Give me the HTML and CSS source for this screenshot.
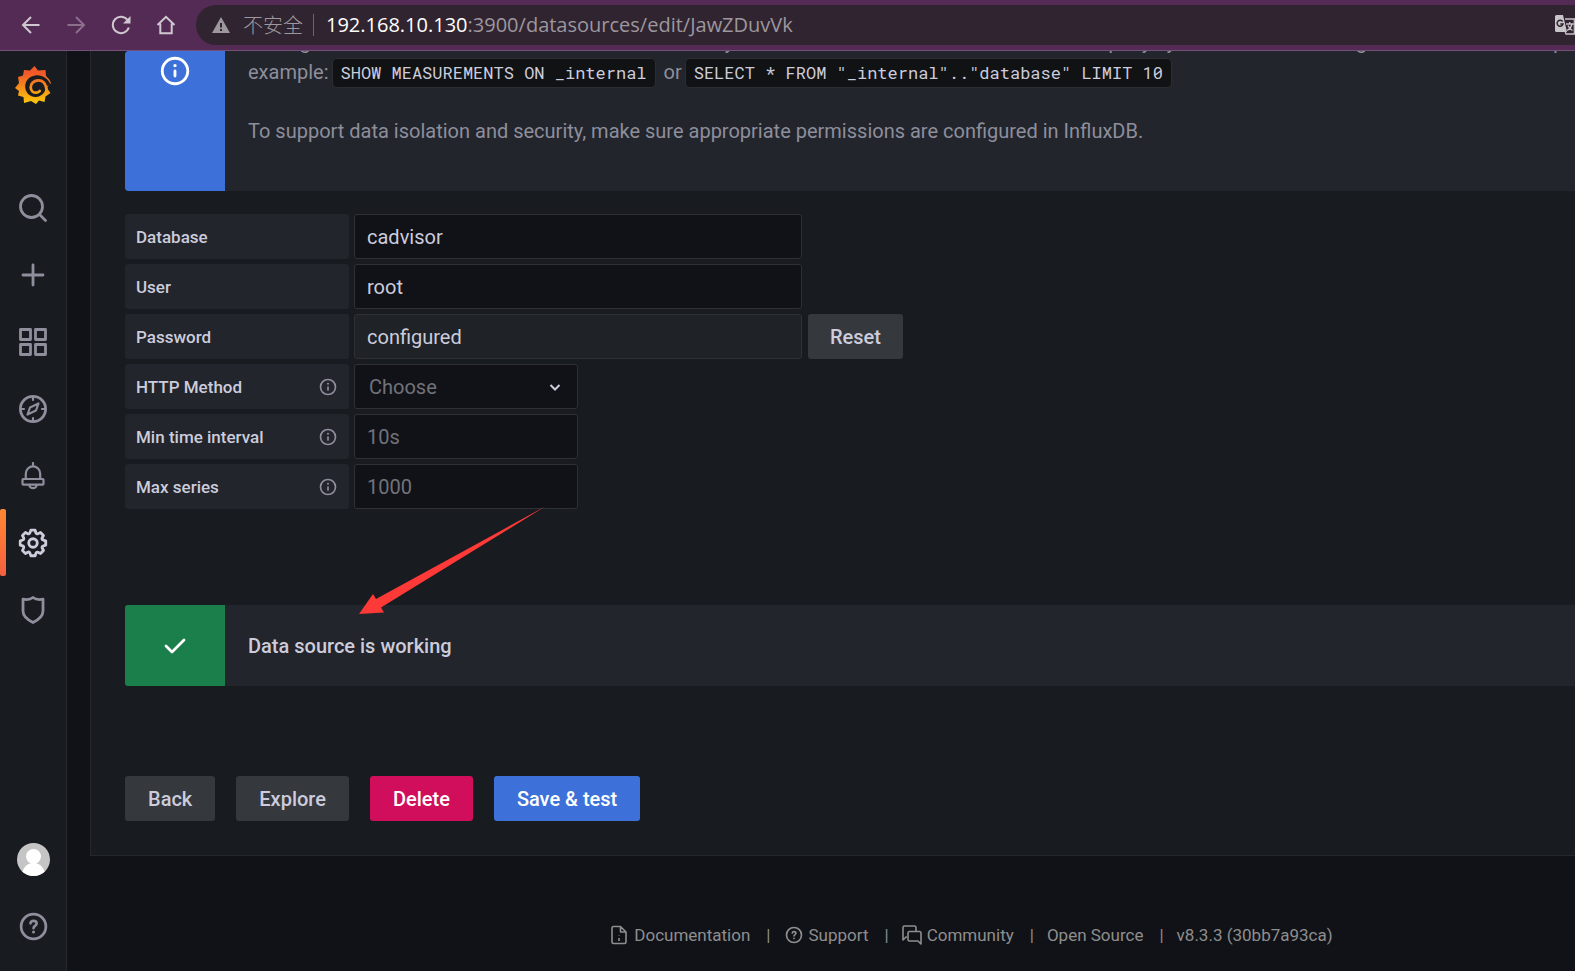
FILE: index.html
```html
<!DOCTYPE html>
<html lang="en">
<head>
<meta charset="utf-8">
<title>InfluxDB: Settings - Grafana</title>
<link rel="stylesheet" href="styles.css">
</head>
<body>
<svg class="defs" aria-hidden="true">
  <symbol id="i-info" viewBox="0 0 24 24"><path stroke="none" fill="currentColor" d="M12 2a10 10 0 1 0 0 20 10 10 0 0 0 0-20zm0 18a8 8 0 1 1 0-16 8 8 0 0 1 0 16zm0-9a1 1 0 0 0-1 1v3.500a1 1 0 0 0 2 0V12a1 1 0 0 0-1-1zm0-4a1.200 1.200 0 1 0 0 2.400A1.200 1.200 0 0 0 12 7z"/></symbol>
  <symbol id="i-help" viewBox="0 0 24 24"><path stroke="none" fill="currentColor" d="M12 2a10 10 0 1 0 0 20 10 10 0 0 0 0-20zm0 18a8 8 0 1 1 0-16 8 8 0 0 1 0 16z"/><path fill="none" stroke="currentColor" stroke-width="1.900" stroke-linecap="round" d="M9.800 9.700C10 8.500 10.900 7.900 12 7.900c1.300 0 2.300.8 2.300 2 0 1.700-2.300 1.600-2.300 3.300"/><circle stroke="none" cx="12" cy="16" r="1.100" fill="currentColor"/></symbol>
</svg>
<div class="browser">
  <header class="toolbar">
    <button class="nav-btn" aria-label="Back"><svg viewBox="0 0 20 20"><path d="M18.500 10H2M10 2 2 10l8 8"/></svg></button>
    <button class="nav-btn nav-off" aria-label="Forward" disabled><svg viewBox="0 0 20 20"><path d="M1.500 10H18M10 2l8 8-8 8"/></svg></button>
    <button class="nav-btn" aria-label="Reload"><svg viewBox="0 0 20 20"><path d="M16.800 5.300A8.200 8.200 0 1 0 17.800 12.500"/><path class="solid" d="M19.500 1v7.500H12z"/></svg></button>
    <button class="nav-btn" aria-label="Home"><svg viewBox="0 0 20 20"><path d="M1.500 10 10 1.800l8.500 8.200M4.300 8.500v9.700h11.400V8.500"/></svg></button>
    <div class="omnibox">
      <svg class="warn" viewBox="0 0 18 16"><path fill="#9d979e" d="M9 0 18 16H0z"/><path fill="#302430" d="M8 6h2v4.500H8zM8 12h2v2H8z"/></svg>
      <span class="insecure">不安全</span>
      <span class="url"><b>192.168.10.130</b>:3900/datasources/edit/JawZDuvVk</span>
      <svg class="translate" viewBox="0 0 20 20"><path fill="#c8c4c8" d="M1.500 0H8l4 17H1.500A1.500 1.500 0 0 1 0 15.500v-14A1.500 1.500 0 0 1 1.500 0z"/><path fill="none" stroke="#302430" stroke-width="1.500" d="M7.600 6.500A3 3 0 1 0 8 9H5.300"/><path fill="none" stroke="#c8c4c8" stroke-width="1.300" d="M10 4h9.300v15H11l-1-3M11 9h7.500M14.700 7v2M17 9c-.8 3-3 5.500-5 6.500M13 10.500c1 2.500 2.500 4 4.500 5"/></svg>
    </div>
  </header>
  <div class="app">
    <nav class="sidebar" aria-label="Main">
      <a class="logo" href="#" aria-label="Grafana"><svg viewBox="0 0 36 38">
        <defs><linearGradient id="g" gradientUnits="userSpaceOnUse" x1="0" y1="0" x2="0" y2="38"><stop offset=".2" stop-color="#f05a28"/><stop offset="1" stop-color="#fbca0a"/></linearGradient></defs>
        <path fill="url(#g)" d="M19.500 0 23 4.500 30.500 4 31 10c3 2.500 4.500 5 5 8l-1.500-.5L32 22l3.500 5-5 3.500-1 5.500-5.500-1.500L21 38l-5-3-7 2-.5-6L3 29.500 4 25l-4-3 4-5-1-6 5-1.500L9 4l6 .5z"/>
        <path fill="#181b1f" d="M35.500 18.500C33 12.500 27.500 9 21.500 9.300 14.500 9.800 9.800 15 10.200 21.300c.4 5.700 5 9.900 10.600 9.700 5.200-.3 9.400-4 9.700-9.300l2.500-2.200z"/>
        <path fill="none" stroke="url(#g)" stroke-width="2.800" stroke-linecap="round" d="M31.500 23C30.500 17 27 14.200 22.700 14.500c-4.200.3-7.200 3.300-7 7 .2 3.200 2.700 5.300 5.600 5.200 1.500-.1 2.700-.7 3.400-1.700"/>
      </svg></a>
      <a class="item" href="#" aria-label="Search"><svg viewBox="0 0 28 28"><circle cx="12.500" cy="12.500" r="11"/><path d="m20.500 20.500 6 6"/></svg></a>
      <a class="item" href="#" aria-label="Create"><svg viewBox="0 0 28 28"><path d="M14 4v20M4 14h20"/></svg></a>
      <a class="item" href="#" aria-label="Dashboards"><svg viewBox="0 0 28 28"><path d="M1.500 1.500h10v10h-10zM16.500 1.500h10v10h-10zM1.500 16.500h10v10h-10zM16.500 16.500h10v10h-10z"/></svg></a>
      <a class="item" href="#" aria-label="Explore"><svg viewBox="0 0 28 28"><circle cx="14" cy="14" r="12.600"/><path class="thin" d="M14 2v3M14 23v3M2 14h3M23 14h3M19.500 8.500l-2.500 7-8.500 4 2.500-7z"/></svg></a>
      <a class="item" href="#" aria-label="Alerting"><svg viewBox="0 0 28 28"><path class="thin" d="M14 1v3M6.800 17v-5.500a7.200 7.200 0 0 1 14.400 0V17M4.300 17h19.400q.8 0 .8.800v4q0 .8-.8.800H4.300q-.8 0-.8-.8v-4q0-.8.800-.8zM10.300 23.500c.6 2 2 2.700 3.700 2.700s3.100-.7 3.700-2.700"/></svg></a>
      <a class="item active" href="#" aria-label="Configuration"><svg viewBox="0 0 24 24"><path class="fill" d="m21.320 9.550-1.890-.63.890-1.780A1 1 0 0 0 20.130 6L18 3.870a1 1 0 0 0-1.150-.19l-1.780.89-.63-1.890A1 1 0 0 0 13.500 2h-3a1 1 0 0 0-.95.680l-.63 1.890-1.780-.89A1 1 0 0 0 6 3.870L3.870 6a1 1 0 0 0-.19 1.150l.89 1.780-1.890.63a1 1 0 0 0-.68.940v3a1 1 0 0 0 .68.950l1.890.63-.89 1.780A1 1 0 0 0 3.870 18L6 20.130a1 1 0 0 0 1.150.19l1.780-.89.63 1.890a1 1 0 0 0 .95.680h3a1 1 0 0 0 .95-.68l.63-1.890 1.780.89a1 1 0 0 0 1.130-.19L20.130 18a1 1 0 0 0 .19-1.150l-.89-1.780 1.890-.63a1 1 0 0 0 .68-.94v-3a1 1 0 0 0-.68-.95zM20 12.780l-1.200.4a2 2 0 0 0-1.220 2.830l.57 1.140-1.100 1.100-1.110-.6a2 2 0 0 0-2.790 1.160l-.4 1.200h-1.590l-.4-1.200a2 2 0 0 0-2.830-1.220l-1.140.57-1.100-1.100.6-1.110a2 2 0 0 0-1.220-2.830l-1.200-.4v-1.500l1.200-.4a2 2 0 0 0 1.220-2.830l-.57-1.110 1.100-1.090 1.110.57a2 2 0 0 0 2.830-1.220l.4-1.200h1.500l.4 1.200a2 2 0 0 0 2.830 1.220l1.140-.57 1.100 1.100-.6 1.100a2 2 0 0 0 1.220 2.830l1.200.4zM12 8a4 4 0 1 0 0 8 4 4 0 0 0 0-8zm0 6a2 2 0 1 1 0-4 2 2 0 0 1 0 4z"/></svg></a>
      <a class="item" href="#" aria-label="Server Admin"><svg viewBox="0 0 28 28"><path d="M14 1.500C11.500 3.500 8 4 4 3.200V15c0 5 5 9 10 11.500 5-2.500 10-6.500 10-11.500V3.200C20 4 16.500 3.500 14 1.500z"/></svg></a>
      <a class="item user" href="#" aria-label="Profile"><svg viewBox="0 0 33 33"><defs><clipPath id="c"><circle cx="16.500" cy="16.500" r="16.500"/></clipPath></defs><g clip-path="url(#c)"><path fill="#c5c5c5" d="M0 0h33v33H0z"/><circle cx="16.500" cy="13.500" r="7.500" fill="#fff"/><path fill="#fff" d="M5 33c0-7 4-13 11.500-13S28 26 28 33z"/></g></svg></a>
      <a class="item help" href="#" aria-label="Help"><svg><use href="#i-help"/></svg></a>
    </nav>
    <main class="page">
      <section class="panel">
        <div class="alert alert-info">
          <div class="alert-icon"><svg><use href="#i-info"/></svg></div>
          <div class="alert-body">
            <p>Setting the database for this datasource does not deny access to other databases. The InfluxDB query syntax allows switching the database in the query. For<br>example:<code>SHOW MEASUREMENTS ON _internal</code> or<code>SELECT * FROM "_internal".."database" LIMIT 10</code></p>
            <p>To support data isolation and security, make sure appropriate permissions are configured in InfluxDB.</p>
          </div>
        </div>
        <form class="settings">
          <div class="row"><label for="db">Database</label><input id="db" class="wide" type="text" value="cadvisor"></div>
          <div class="row"><label for="user">User</label><input id="user" class="wide" type="text" value="root"></div>
          <div class="row"><label for="pw">Password</label><input id="pw" class="wide" type="text" value="configured" disabled><button type="button" class="btn reset">Reset</button></div>
          <div class="row"><label for="method">HTTP Method<svg><use href="#i-info"/></svg></label><div class="select"><select id="method"><option>Choose</option><option>GET</option><option>POST</option></select><svg viewBox="0 0 14 10"><path d="m2.500 3 4.500 4.500L11.500 3"/></svg></div></div>
          <div class="row"><label for="min">Min time interval<svg><use href="#i-info"/></svg></label><input id="min" type="text" placeholder="10s"></div>
          <div class="row"><label for="max">Max series<svg><use href="#i-info"/></svg></label><input id="max" type="text" placeholder="1000"></div>
        </form>
        <div class="alert alert-ok" role="status">
          <div class="alert-icon"><svg viewBox="0 0 28 28"><path d="m5 14 6 6L23 8" fill="none" stroke="currentColor" stroke-width="2.800" stroke-linecap="round" stroke-linejoin="round"/></svg></div>
          <div class="alert-body"><strong>Data source is working</strong></div>
          <svg class="arrow" viewBox="0 0 187 110"><path fill="#fd3a38" d="M187 0 17 93l-3-5L0 108l25-1.500-3-5z"/></svg>
        </div>
        <div class="actions">
          <button class="btn">Back</button>
          <button class="btn">Explore</button>
          <button class="btn danger">Delete</button>
          <button class="btn primary">Save &amp; test</button>
        </div>
      </section>
      <footer class="footer">
        <a href="#"><svg viewBox="0 0 20 20"><path d="M11.500 1.500h-7q-1.500 0-1.500 1.500v14q0 1.500 1.500 1.500h11q1.500 0 1.500-1.500V7zM11.500 1.500V7H17M10 10v.6M10 13v3"/></svg>Documentation</a><i>|</i>
        <a href="#"><svg class="big"><use href="#i-help"/></svg>Support</a><i>|</i>
        <a href="#"><svg viewBox="0 0 20 20"><path d="M5 12H4l-3 3V2.500Q1 1 2.500 1h10Q14 1 14 2.500V6M7.500 6.500h10q1.500 0 1.500 1.500v11l-3-3H7.500Q6 16 6 14.500V8q0-1.500 1.500-1.500z"/></svg>Community</a><i>|</i>
        <a href="#">Open Source</a><i>|</i>
        <span>v8.3.3 (30bb7a93ca)</span>
      </footer>
    </main>
  </div>
</div>
</body>
</html>
```
FILE: styles.css
```css
* { box-sizing: border-box; }
body { margin: 0; background: #111217; color: #ccccdc; font: 20px/28px Roboto, "Liberation Sans", sans-serif; }
button, input, select { font: inherit; color: inherit; }
a { color: inherit; text-decoration: none; }
svg { display: block; flex: none; }
.defs { position: absolute; width: 0; height: 0; }
.browser { display: flex; flex-direction: column; height: 100vh; overflow: hidden; }

/* Browser toolbar */
.toolbar { display: flex; align-items: center; flex: none; height: 51px; padding-left: 20px; background: #542b54; border-bottom: 1px solid #75507a; }
.nav-btn { display: grid; place-items: center; width: 22px; height: 32px; margin-right: 23px; padding: 0; border: 0; background: none; color: #d0c8d0; }
.nav-btn svg { width: 20px; height: 20px; fill: none; stroke: currentColor; stroke-width: 2; overflow: visible; }
.nav-btn .solid { fill: currentColor; stroke: none; }
.nav-off { color: #8c6e8d; }
.omnibox { display: flex; align-items: center; flex: 1; height: 40px; padding-left: 16px; border-radius: 20px 0 0 20px; background: #302430; }
.nav-btn + .omnibox { margin-left: -4px; }
.warn { width: 18px; height: 16px; }
.insecure { margin-left: 13px; padding-right: 10px; border-right: 1px solid #6d646d; color: #9d979e; font: 20px/22px "Noto Sans CJK SC", sans-serif; font-weight: 300; }
.url { flex: 1; margin-left: 12px; color: #9d979e; font: 20px/28px "Open Sans", sans-serif; }
.url b { color: #fff; font-weight: 400; }
.translate { width: 20px; height: 20px; }

/* Side menu */
.app { display: flex; flex: 1; min-height: 0; }
.sidebar { display: flex; flex-direction: column; flex: none; width: 67px; padding-bottom: 11px; background: #181b1f; border-right: 1px solid #25272c; color: #8e8e9c; }
.logo { display: grid; justify-content: center; align-content: start; height: 123px; padding-top: 15px; }
.logo svg { width: 36px; height: 38px; }
.item { display: grid; place-items: center; position: relative; flex: none; height: 67px; }
.item svg { width: 28px; height: 28px; fill: none; stroke: currentColor; stroke-width: 2.8; stroke-linecap: round; stroke-linejoin: round; }
.item .fill { fill: currentColor; stroke: none; }
.item .thin { stroke-width: 2.2; }
.active { color: #ccccdc; }
.item.active svg { width: 34px; height: 34px; }
.active::before { content: ""; position: absolute; left: 0; top: 0; bottom: 0; width: 6px; border-radius: 2px; background: linear-gradient(#ff8833, #f55f3e); }
.user { margin-top: auto; }
.item.user svg { width: 33px; height: 33px; stroke: none; }
.item.help svg { width: 33px; height: 33px; }

/* Page */
.page { flex: 1; min-width: 0; padding-left: 23px; overflow: hidden; }
.panel { padding: 0 0 34px 34px; background: #181b1f; border: solid #25272c; border-width: 0 0 1px 1px; }
.alert { display: flex; position: relative; border-radius: 3px 0 0 3px; background: #22252b; }
.alert-icon { display: grid; justify-content: center; flex: none; width: 100px; border-radius: 3px 0 0 3px; color: #fff; }
.alert-body { min-width: 0; padding-left: 23px; white-space: nowrap; }
.alert-info { height: 140px; overflow: hidden; color: #8e8e9c; }
.alert-info .alert-icon { align-content: start; padding-top: 3px; background: #3d71d9; }
.alert-info .alert-icon svg { width: 34px; height: 34px; }
.alert-info p { margin: 0 0 28px; line-height: 30px; }
.alert-info p:first-child { margin-top: -24px; }
code { display: inline-block; margin: 0 3px; padding: 0 8px; border: 1px solid #2c2d31; border-radius: 5px; background: #111214; color: #ccccdc; font: 17px/28px "Roboto Mono", "DejaVu Sans Mono", monospace; }
.settings { display: grid; gap: 5px; padding: 23px 0 96px; }
.row { display: flex; height: 45px; }
.row label { display: flex; align-items: center; justify-content: space-between; width: 224px; margin-right: 5px; padding: 0 11px; border-radius: 3px; background: #22252b; font-size: 17px; font-weight: 500; }
.row label svg { width: 20px; height: 20px; color: #8e8e9c; }
.row input, .select { width: 224px; border: 1px solid #2e3036; border-radius: 3px; background: #111217; }
.row input { padding: 0 12px; }
.row .wide { width: 448px; }
.row input:disabled { background: #1f2226; }
.row input::placeholder { color: #71727a; opacity: 1; }
.select { display: flex; align-items: center; position: relative; }
.select select { width: 100%; height: 100%; padding: 0 14px; border: 0; background: none; color: #71727a; appearance: none; }
.select svg { position: absolute; right: 15px; width: 14px; height: 10px; fill: none; stroke: #ccccdc; stroke-width: 2; pointer-events: none; }
.btn { height: 45px; padding: 0 23px; border: 0; border-radius: 3px; background: #35383d; color: #ccccdc; font-weight: 500; }
.reset { margin-left: 6px; padding: 0 22px; }
.danger { background: #d10e5c; color: #fff; }
.primary { background: #3d71d9; color: #fff; }
.alert-ok { height: 81px; align-items: stretch; }
.alert-ok .alert-icon { align-content: center; background: #1a7f4b; }
.alert-ok .alert-icon svg { width: 28px; height: 28px; }
.alert-ok .alert-body { display: flex; align-items: center; }
.alert-ok strong { font-weight: 500; }
.arrow { position: absolute; left: 234px; top: -99px; width: 187px; height: 110px; }
.actions { display: flex; gap: 21px; padding-top: 90px; }
.footer { display: flex; justify-content: center; align-items: center; padding: 65px 0 0 277px; color: #8e8e8e; font-size: 17px; white-space: nowrap; }
.footer a { display: flex; align-items: center; gap: 5px; }
.footer i { margin: 0 13px 0 16px; font-style: normal; }
.footer svg { width: 20px; height: 20px; fill: none; stroke: currentColor; stroke-width: 1.6; stroke-linejoin: round; }
```
